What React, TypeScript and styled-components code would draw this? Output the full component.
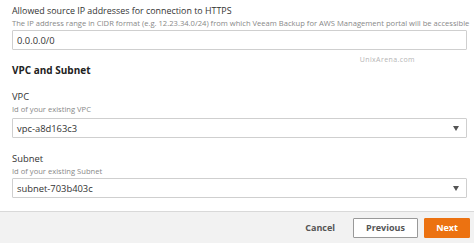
import React from "react";
import styled, { createGlobalStyle } from "styled-components";

const Global = createGlobalStyle`
  html, body { margin: 0; padding: 0; background: #fff; }
  body { font-family: "Open Sans", "Noto Sans", sans-serif; }
`;

const Page = styled.div`
  width: 474px;
  height: 243px;
  display: flex;
  flex-direction: column;
  overflow: hidden;
  background: #fff;
`;

const Form = styled.div`
  flex: 1;
  padding: 5px 7px 0 12px;
  display: flex;
  flex-direction: column;
`;

const Label = styled.div<{ $mt?: number; $size?: number }>`
  font-size: ${(p) => p.$size ?? 9.4}px;
  line-height: 12px;
  color: #333;
  margin-top: ${(p) => p.$mt ?? 0}px;
  white-space: nowrap;
`;

const Hint = styled.div<{ $lh?: number }>`
  font-size: 7.6px;
  line-height: ${(p) => p.$lh ?? 9}px;
  color: #888;
  white-space: nowrap;
`;

const Box = styled.div<{ $mt: number }>`
  box-sizing: border-box;
  height: 20px;
  margin-top: ${(p) => p.$mt}px;
  border: 1px solid #cfcfcf;
  border-radius: 1px;
  display: flex;
  align-items: center;
  padding: 0 7px 0 4px;
  font-size: 9.4px;
  color: #333;
  background: #fff;
`;

const Value = styled.span`
  flex: 1;
`;

const Arrow = styled.span`
  width: 0;
  height: 0;
  border-left: 3.5px solid transparent;
  border-right: 3.5px solid transparent;
  border-top: 5px solid #555;
`;

const Watermark = styled.div`
  margin-top: 6px;
  align-self: flex-end;
  margin-right: 52px;
  font-size: 7px;
  line-height: 8px;
  letter-spacing: 0.4px;
  color: #b5b5b5;
`;

const Heading = styled.div`
  font-size: 10px;
  font-weight: 700;
  line-height: 12px;
  color: #222;
`;

const Footer = styled.div`
  height: 32px;
  box-sizing: border-box;
  border-top: 1px solid #d9d9d9;
  background: #f2f2f2;
  display: flex;
  align-items: center;
  justify-content: flex-end;
  padding-right: 4px;
`;

const Button = styled.button<{ $kind: "link" | "normal" | "primary" }>`
  box-sizing: border-box;
  height: 20px;
  font-family: inherit;
  font-size: 9px;
  font-weight: 700;
  padding: 0;
  border-radius: 1px;
  cursor: pointer;
  ${(p) =>
    p.$kind === "link"
      ? `background: transparent; border: none; color: #555; margin-right: 18px;`
      : p.$kind === "normal"
      ? `background: #fff; border: 1px solid #999; color: #555; width: 65px; margin-right: 6px;`
      : `background: #ec7211; border: 1px solid #ec7211; color: #fff; width: 46px;`}
`;

export default function App() {
  return (
    <Page>
      <Global />
      <Form>
        <Label $size={8.9}>Allowed source IP addresses for connection to HTTPS</Label>
        <Hint $lh={12}>
          The IP address range in CIDR format (e.g. 12.23.34.0/24) from which Veeam Backup for AWS Management portal will be accessible
        </Hint>
        <Box $mt={1}>
          <Value>0.0.0.0/0</Value>
        </Box>
        <Watermark>UnixArena.com</Watermark>
        <Heading>VPC and Subnet</Heading>
        <Label $mt={15}>VPC</Label>
        <Hint $lh={12}>Id of your existing VPC</Hint>
        <Box $mt={3}>
          <Value>vpc-a8d163c3</Value>
          <Arrow />
        </Box>
        <Label $mt={15}>Subnet</Label>
        <Hint $lh={12}>Id of your existing Subnet</Hint>
        <Box $mt={1}>
          <Value>subnet-703b403c</Value>
          <Arrow />
        </Box>
      </Form>
      <Footer>
        <Button $kind="link">Cancel</Button>
        <Button $kind="normal">Previous</Button>
        <Button $kind="primary">Next</Button>
      </Footer>
    </Page>
  );
}
